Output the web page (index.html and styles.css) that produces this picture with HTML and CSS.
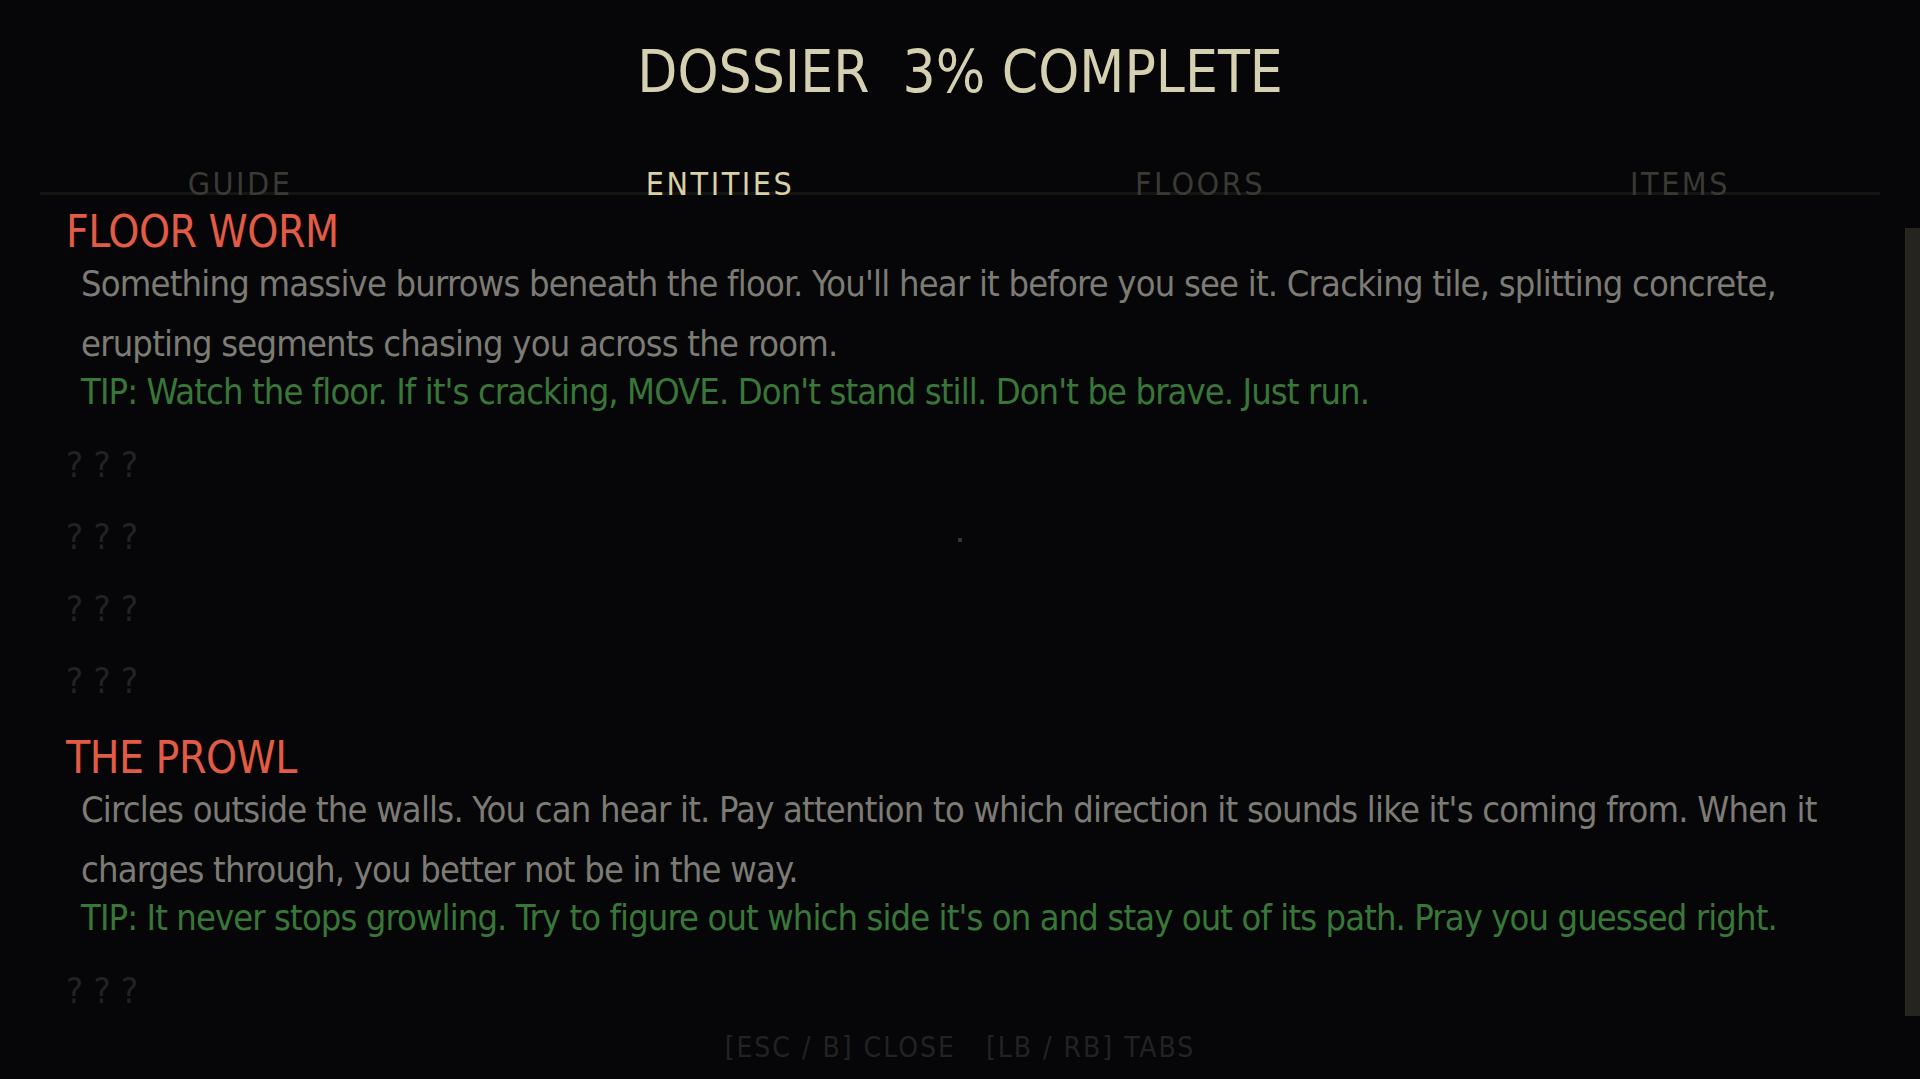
FILE: index.html
```html
<!DOCTYPE html>
<html lang="en">
<head>
<meta charset="utf-8">
<title>Dossier</title>
<link rel="stylesheet" href="styles.css">
</head>
<body>
<div class="screen">
  <header class="title">DOSSIER&nbsp; 3% COMPLETE</header>
  <nav class="tabs">
    <div class="tab">GUIDE</div>
    <div class="tab active">ENTITIES</div>
    <div class="tab">FLOORS</div>
    <div class="tab">ITEMS</div>
  </nav>
  <main class="content">
    <div class="list">
      <section class="entry">
        <h2 class="name">FLOOR WORM</h2>
        <p class="desc">Something massive burrows beneath the floor. You'll hear it before you see it. Cracking tile, splitting concrete, erupting segments chasing you across the room.</p>
        <p class="tip">TIP: Watch the floor. If it's cracking, MOVE. Don't stand still. Don't be brave. Just run.</p>
      </section>
      <div class="locked">? ? ?</div>
      <div class="locked">? ? ?</div>
      <div class="locked">? ? ?</div>
      <div class="locked">? ? ?</div>
      <section class="entry">
        <h2 class="name">THE PROWL</h2>
        <p class="desc">Circles outside the walls. You can hear it. Pay attention to which direction it sounds like it's coming from. When it charges through, you better not be in the way.</p>
        <p class="tip">TIP: It never stops growling. Try to figure out which side it's on and stay out of its path. Pray you guessed right.</p>
      </section>
      <div class="locked">? ? ?</div>
    </div>
    <div class="scrollbar"><div class="thumb"></div></div>
  </main>
  <footer class="hint">[ESC / B] CLOSE   [LB / RB] TABS</footer>
  <div class="crosshair"></div>
</div>
</body>
</html>
```
FILE: styles.css
```css
html, body {
  margin: 0;
  padding: 0;
  background: #060608;
}
body {
  font-family: "DejaVu Sans Condensed", "Liberation Sans Narrow", "Liberation Sans", sans-serif;
  overflow: hidden;
}
.screen {
  position: relative;
  height: 1079px;
  display: flex;
  flex-direction: column;
}
.title {
  padding-top: 42px;
  height: 60px;
  line-height: 60px;
  font-size: 58px;
  letter-spacing: 0;
  color: #d4d0b0;
  text-align: center;
}
.tabs {
  margin-top: 62px;
  display: grid;
  grid-template-columns: repeat(4, 1fr);
  height: 40px;
  background-image: linear-gradient(#151514, #151514);
  background-repeat: no-repeat;
  background-size: calc(100% - 80px) 3px;
  background-position: 40px 28px;
}
.tab {
  text-align: center;
  font-size: 32px;
  line-height: 40px;
  letter-spacing: 2.5px;
  color: #3a3a34;
}
.tab.active {
  color: #d8d1a4;
}
.content {
  flex: 1;
  min-height: 0;
  display: flex;
  overflow: hidden;
}
.list {
  flex: 1;
  padding: 6px 45px 0 66px;
  display: flex;
  flex-direction: column;
  gap: 38px;
}
.entry {
  display: flex;
  flex-direction: column;
}
.name {
  margin: 0;
  font-weight: normal;
  font-size: 44px;
  line-height: 44px;
  letter-spacing: -0.5px;
  color: #e25b44;
}
.desc {
  margin: 0;
  padding-left: 15px;
  font-size: 36px;
  line-height: 60px;
  letter-spacing: -0.8px;
  color: #7c7b74;
}
.tip {
  margin: 0;
  padding-left: 15px;
  font-size: 36px;
  line-height: 36px;
  letter-spacing: -0.9px;
  white-space: nowrap;
  color: #397739;
}
.locked {
  font-size: 36px;
  line-height: 34px;
  height: 34px;
  letter-spacing: 0;
  color: #222222;
}
.scrollbar {
  width: 15px;
}
.thumb {
  margin-top: 24px;
  height: 788px;
  background: #25241f;
  border-left: 1px solid #2c2b26;
}
.hint {
  text-align: center;
  white-space: pre;
  font-size: 28px;
  line-height: 30px;
  letter-spacing: 2px;
  color: #222222;
  padding-bottom: 16px;
}
.crosshair {
  position: absolute;
  left: 958px;
  top: 538px;
  width: 4px;
  height: 4px;
  background: #333333;
}
```
